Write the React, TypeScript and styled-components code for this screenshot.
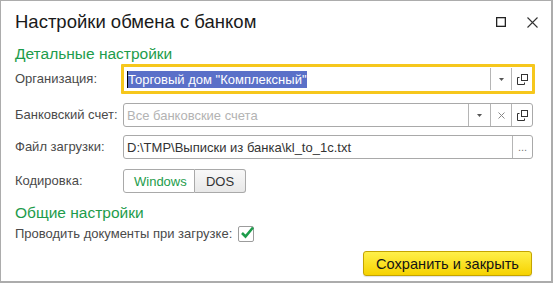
import React from "react";
import styled, { createGlobalStyle, css } from "styled-components";

const GlobalStyle = createGlobalStyle`
  html, body {
    margin: 0;
    padding: 0;
    background: #ffffff;
  }
  body {
    font-family: "Liberation Sans", Arial, sans-serif;
  }
`;

const GREEN = "#1d9c4b";
const FIELD_BORDER = "#a9a9a9";

const Window = styled.div`
  box-sizing: border-box;
  width: 553px;
  height: 283px;
  border: 1px solid #acacac;
  border-right-width: 2px;
  border-bottom-width: 2px;
  background: #ffffff;
  display: flex;
  flex-direction: column;
`;

const TitleBar = styled.div`
  box-sizing: border-box;
  height: 44px;
  display: flex;
  align-items: flex-start;
  justify-content: space-between;
  padding: 10px 9px 0 14px;
`;

const Title = styled.h1`
  margin: 0;
  font-size: 18.5px;
  line-height: 22px;
  font-weight: normal;
  color: #1a1a1a;
`;

const WindowButtons = styled.div`
  display: flex;
  gap: 11px;
`;

const WindowButton = styled.button`
  width: 20px;
  height: 22px;
  padding: 0;
  border: none;
  background: transparent;
  display: flex;
  align-items: center;
  justify-content: center;
`;

const Body = styled.div`
  display: flex;
  flex-direction: column;
  padding: 0 19px 0 14px;
`;

const GroupTitle = styled.div<{ $gap: number }>`
  margin-top: ${({ $gap }) => $gap}px;
  font-size: 15.5px;
  line-height: 18px;
  color: ${GREEN};
`;

const Row = styled.div<{ $gap: number; $height: number }>`
  display: grid;
  grid-template-columns: 108px 410px;
  align-items: center;
  margin-top: ${({ $gap }) => $gap}px;
  height: ${({ $height }) => $height}px;
`;

const Label = styled.label`
  font-size: 13px;
  line-height: 16px;
  color: #4a4a4a;
  white-space: nowrap;
`;

const Field = styled.div<{ $focused?: boolean }>`
  box-sizing: border-box;
  display: flex;
  align-items: stretch;
  background: #ffffff;
  ${({ $focused }) =>
    $focused
      ? css`
          height: 30px;
          margin: 0 -2px;
          border: 3px solid #f6c71c;
          border-radius: 1px;
        `
      : css`
          height: 24px;
          border: 1px solid ${FIELD_BORDER};
          border-radius: 3px;
        `}
`;

const Value = styled.div<{ $placeholder?: boolean }>`
  flex: 1;
  display: flex;
  align-items: center;
  padding-left: 3px;
  font-size: 13px;
  color: ${({ $placeholder }) => ($placeholder ? "#b3b3b3" : "#333333")};
  white-space: nowrap;
  overflow: hidden;
`;

const Selection = styled.span`
  border-left: 1px solid #000000;
  background: #5a70c8;
  color: #ffffff;
  line-height: 17px;
`;

const FieldButton = styled.div<{ $inset?: boolean; $width?: number }>`
  width: ${({ $width }) => $width ?? 20}px;
  display: flex;
  align-items: center;
  justify-content: center;
  border-left: 1px solid #b5b5b5;
  color: #777777;
  font-size: 11px;
  ${({ $inset }) =>
    $inset &&
    css`
      margin: 1px 0;
    `}
`;

const Toggle = styled.div`
  display: flex;
  height: 24px;
`;

const ToggleButton = styled.button<{ $active?: boolean }>`
  box-sizing: border-box;
  height: 24px;
  margin: 0;
  padding: 0 10px;
  font-family: inherit;
  font-size: 13px;
  border: 1px solid ${FIELD_BORDER};
  color: ${({ $active }) => ($active ? GREEN : "#333333")};
  background: ${({ $active }) =>
    $active ? "#ffffff" : "linear-gradient(#f8f8f8, #e8e8e8)"};
  &:first-child {
    border-radius: 3px 0 0 3px;
    width: 72px;
  }
  &:last-child {
    border-left: none;
    border-radius: 0 3px 3px 0;
    width: 51px;
  }
`;

const CheckRow = styled.div`
  display: flex;
  align-items: center;
  gap: 6px;
  margin-top: 4px;
  height: 16px;
`;

const CheckBox = styled.div`
  position: relative;
  box-sizing: border-box;
  width: 16px;
  height: 16px;
  border: 1px solid #9c9c9c;
  border-radius: 2px;
  background: #ffffff;
  svg {
    position: absolute;
    left: 1px;
    top: -2px;
  }
`;

const Footer = styled.div`
  display: flex;
  justify-content: flex-end;
  padding: 9px 19px 0 0;
`;

const DefaultButton = styled.button`
  box-sizing: border-box;
  width: 169px;
  height: 25px;
  padding: 0;
  font-family: inherit;
  font-size: 14.6px;
  color: #141414;
  border: 1px solid #c4a400;
  border-radius: 3px;
  background: linear-gradient(#fff04a, #f6d200);
  box-shadow: 0 1px 1px rgba(0, 0, 0, 0.12);
`;

const DropArrow = () => (
  <svg width="5" height="3" viewBox="0 0 5 3">
    <polygon points="0,0 5,0 2.5,3" fill="#555" />
  </svg>
);

const OpenIcon = () => (
  <svg width="11" height="11" viewBox="0 0 11 11" fill="none" stroke="#333" strokeWidth="1">
    <rect x="4.5" y="0.5" width="6" height="6" />
    <path d="M2.5 3.5 H0.5 V10.5 H7.5 V8.5" />
  </svg>
);

const ClearIcon = () => (
  <svg width="7" height="7" viewBox="0 0 7 7" stroke="#888" strokeWidth="1">
    <path d="M0.5 0.5 L6.5 6.5 M6.5 0.5 L0.5 6.5" />
  </svg>
);

export default function App() {
  return (
    <>
      <GlobalStyle />
      <Window>
        <TitleBar>
          <Title>Настройки обмена с банком</Title>
          <WindowButtons>
            <WindowButton aria-label="Развернуть">
              <svg width="10" height="10" viewBox="0 0 10 10" fill="none" stroke="#222" strokeWidth="1.3">
                <rect x="0.65" y="0.65" width="8.7" height="8.7" />
              </svg>
            </WindowButton>
            <WindowButton aria-label="Закрыть">
              <svg width="11" height="11" viewBox="0 0 11 11" stroke="#333" strokeWidth="1.1">
                <path d="M0.5 0.5 L10.5 10.5 M10.5 0.5 L0.5 10.5" />
              </svg>
            </WindowButton>
          </WindowButtons>
        </TitleBar>

        <Body>
          <GroupTitle $gap={0}>Детальные настройки</GroupTitle>

          <Row $gap={1} $height={30}>
            <Label>Организация:</Label>
            <Field $focused>
              <Value>
                <Selection>Торговый дом "Комплексный"</Selection>
              </Value>
              <FieldButton $inset>
                <DropArrow />
              </FieldButton>
              <FieldButton $inset>
                <OpenIcon />
              </FieldButton>
            </Field>
          </Row>

          <Row $gap={9} $height={24}>
            <Label>Банковский счет:</Label>
            <Field>
              <Value $placeholder>Все банковские счета</Value>
              <FieldButton $width={21}>
                <DropArrow />
              </FieldButton>
              <FieldButton>
                <ClearIcon />
              </FieldButton>
              <FieldButton>
                <OpenIcon />
              </FieldButton>
            </Field>
          </Row>

          <Row $gap={8} $height={24}>
            <Label>Файл загрузки:</Label>
            <Field>
              <Value>D:\TMP\Выписки из банка\kl_to_1c.txt</Value>
              <FieldButton $width={19}>...</FieldButton>
            </Field>
          </Row>

          <Row $gap={10} $height={24}>
            <Label>Кодировка:</Label>
            <Toggle>
              <ToggleButton $active>Windows</ToggleButton>
              <ToggleButton>DOS</ToggleButton>
            </Toggle>
          </Row>

          <GroupTitle $gap={11}>Общие настройки</GroupTitle>

          <CheckRow>
            <Label>Проводить документы при загрузке:</Label>
            <CheckBox>
              <svg width="15" height="15" viewBox="0 0 15 15" fill="none">
                <path d="M2 8 L5.5 11.5 L13 2.5" stroke={GREEN} strokeWidth="2.6" strokeLinejoin="miter" />
              </svg>
            </CheckBox>
          </CheckRow>
        </Body>

        <Footer>
          <DefaultButton>Сохранить и закрыть</DefaultButton>
        </Footer>
      </Window>
    </>
  );
}
